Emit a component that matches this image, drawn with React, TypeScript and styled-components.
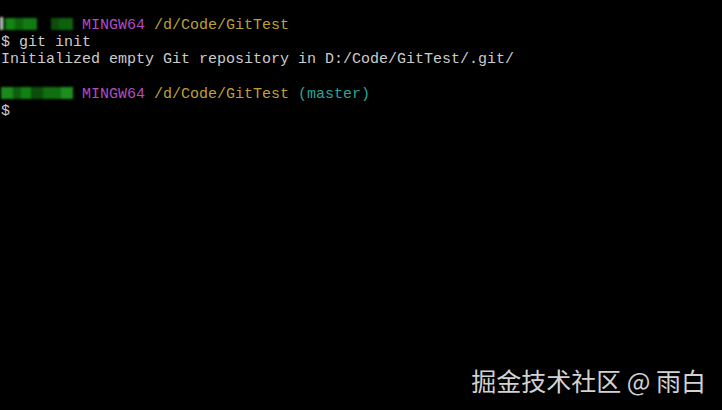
import React from "react";
import styled, { createGlobalStyle } from "styled-components";

const Global = createGlobalStyle`
  html, body { margin: 0; padding: 0; background: #000; }
  #root { width: 722px; height: 410px; }
`;

const Terminal = styled.div`
  position: relative;
  width: 722px;
  height: 410px;
  box-sizing: border-box;
  padding: 17px 0 0 1px;
  background: #000;
  color: #cccccc;
  font-family: "Liberation Mono", "DejaVu Sans Mono", monospace;
  font-size: 15px;
  line-height: 17.2px;
  white-space: pre;
  overflow: hidden;
`;

const Line = styled.div`
  height: 17.2px;
`;

const Colored = styled.span<{ $tone: "magenta" | "yellow" | "cyan" }>`
  color: ${(p) =>
    p.$tone === "magenta" ? "#b04cc4" : p.$tone === "yellow" ? "#bfa035" : "#2aa59e"};
`;

const Redacted = styled.span<{ $variant: "a" | "b" }>`
  position: relative;
  display: inline-block;
  width: 72px;
  height: 12px;
  vertical-align: -1px;
  background: ${(p) =>
    p.$variant === "a"
      ? "linear-gradient(to right, #0b3d0b 0 5px, #128512 5px 14px, #0c640c 14px 22px, #137a13 22px 36px, #000 36px 50px, #0c4f0c 50px 58px, #0e620e 58px 72px)"
      : "linear-gradient(to right, #1a8a1a 0 12px, #0e5e0e 12px 20px, #138013 20px 30px, #0b4d0b 30px 42px, #116e11 42px 60px, #1d8d1d 60px 72px)"};
  filter: blur(1.1px);
`;

const Cursor = styled.span`
  position: absolute;
  left: -1px;
  top: -1px;
  width: 3px;
  height: 13px;
  background: #c8c8c8;
`;

const Watermark = styled.div`
  position: absolute;
  right: 16px;
  bottom: 15px;
  font-family: "Noto Sans CJK SC", "Noto Sans", sans-serif;
  font-size: 25px;
  line-height: 30px;
  color: #d2d2d2;
  white-space: pre;
`;

export default function App() {
  return (
    <>
      <Global />
      <Terminal>
        <Line>
          <Redacted $variant="a">
            <Cursor />
          </Redacted>{" "}
          <Colored $tone="magenta">MINGW64</Colored>{" "}
          <Colored $tone="yellow">/d/Code/GitTest</Colored>
        </Line>
        <Line>$ git init</Line>
        <Line>Initialized empty Git repository in D:/Code/GitTest/.git/</Line>
        <Line />
        <Line>
          <Redacted $variant="b" />{" "}
          <Colored $tone="magenta">MINGW64</Colored>{" "}
          <Colored $tone="yellow">/d/Code/GitTest</Colored>{" "}
          <Colored $tone="cyan">(master)</Colored>
        </Line>
        <Line>$</Line>
        <Watermark>掘金技术社区 @ 雨白</Watermark>
      </Terminal>
    </>
  );
}
